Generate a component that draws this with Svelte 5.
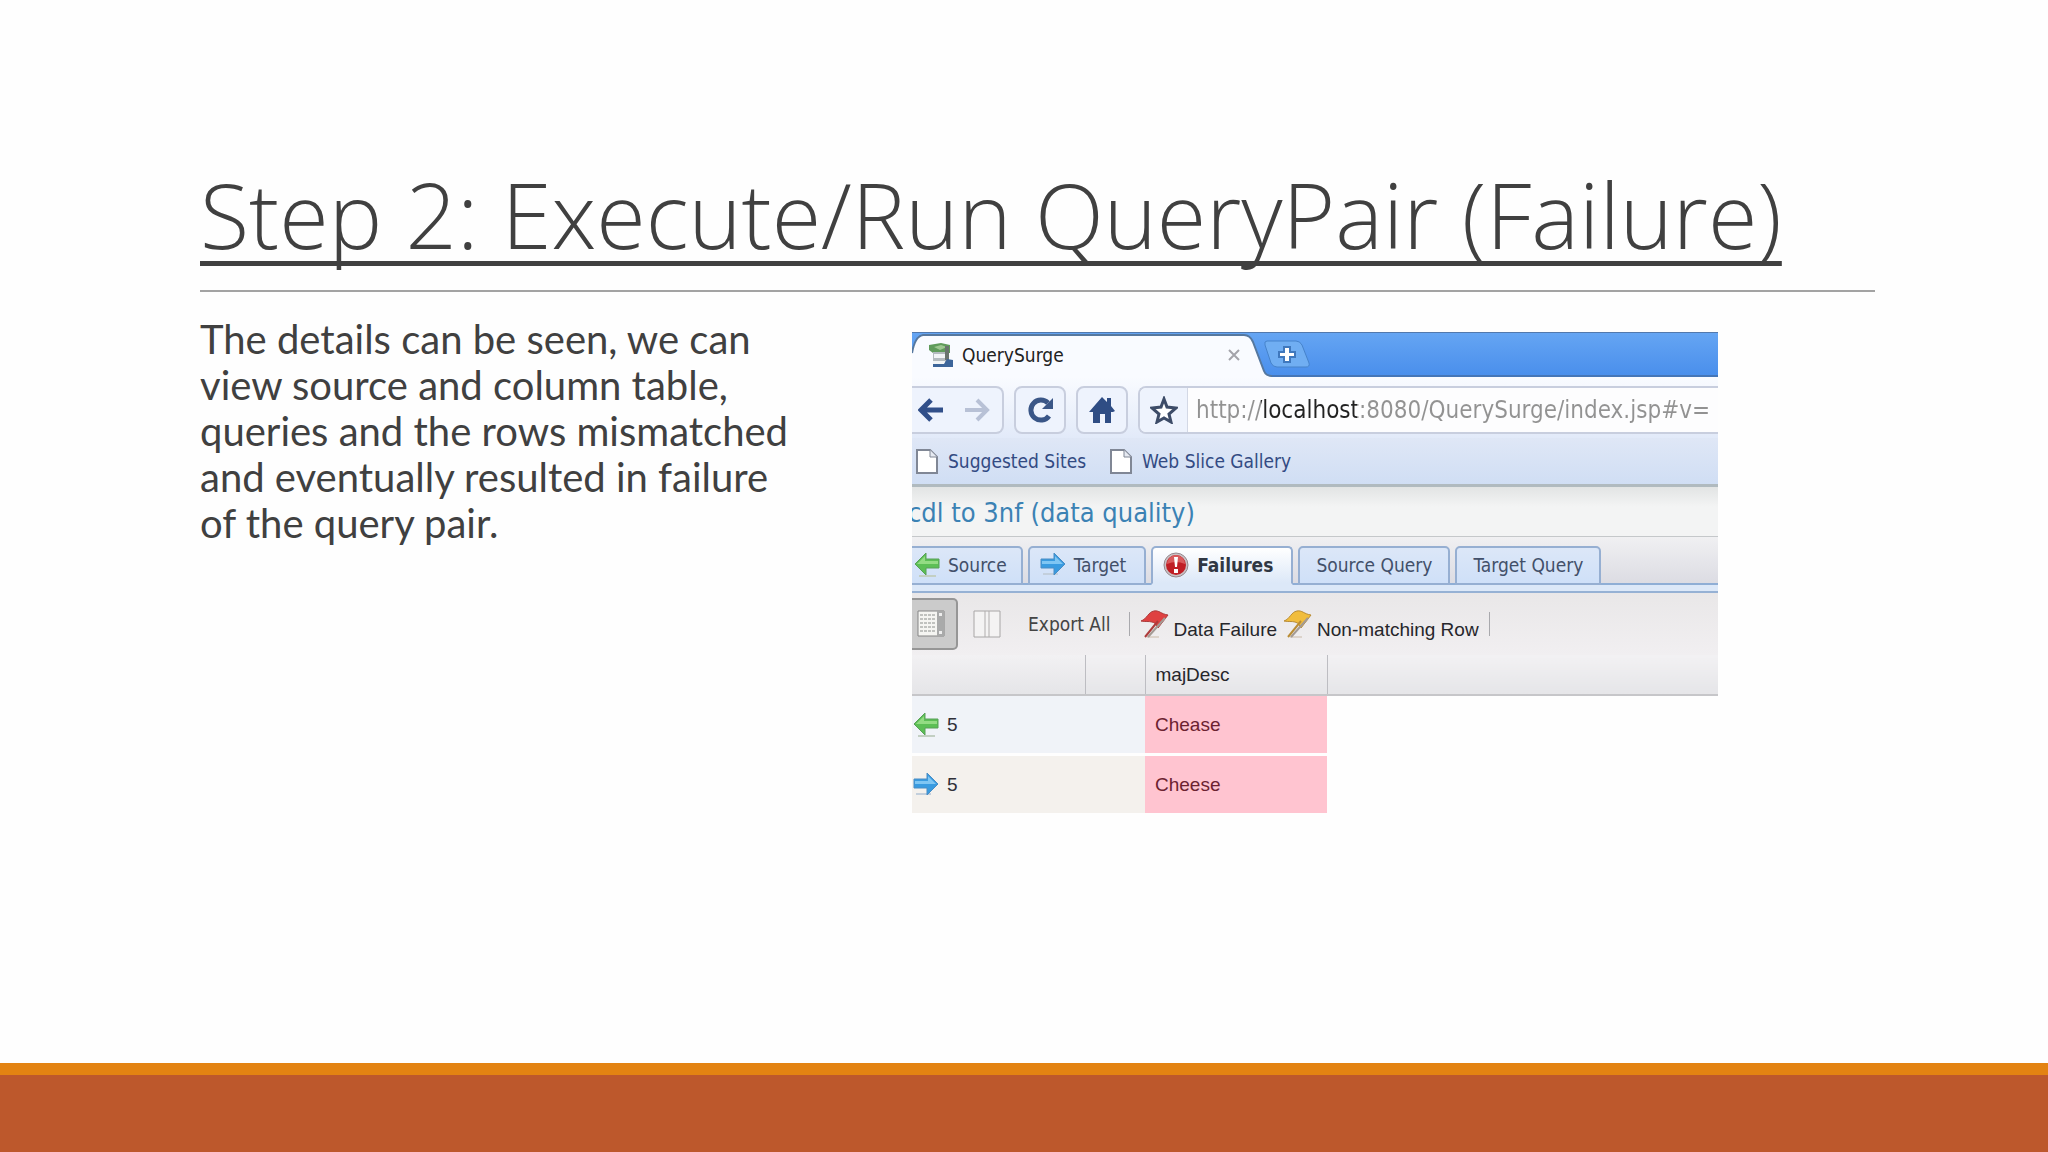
<script lang="ts">
  let address = $state('http://localhost:8080/QuerySurge/index.jsp#v=');
  let selectedTab = $state('Failures');

  const bookmarks = ['Suggested Sites', 'Web Slice Gallery'];
  const tabs = [
    { name: 'Source', icon: 'left' },
    { name: 'Target', icon: 'right' },
    { name: 'Failures', icon: 'alert' },
    { name: 'Source Query', icon: '' },
    { name: 'Target Query', icon: '' },
  ];
  const rows = [
    { side: 'left', id: 5, majDesc: 'Chease' },
    { side: 'right', id: 5, majDesc: 'Cheese' },
  ];
</script>

{#snippet arrow(side: string)}
  {#if side === 'left'}
    <svg class="icon" viewBox="0 0 26 26" aria-hidden="true">
      <path d="M5 24H22" stroke="#c3cfc3" stroke-width="2" />
      <path d="M1 12 12 1v6h13v9H12v7Z" fill="#5cbf55" stroke="#58a058" />
      <path d="M3 12 11 4v5h13v3Z" fill="#93dc83" />
    </svg>
  {:else}
    <svg class="icon" viewBox="0 0 26 26" aria-hidden="true">
      <path d="M3 22H18" stroke="#c3cfdc" stroke-width="2" />
      <path d="M25 12 14 1v6H1v9h13v7Z" fill="#399be0" stroke="#4a8dc4" />
      <path d="M23 12 15 4v5H2v3Z" fill="#7fc6f3" />
    </svg>
  {/if}
{/snippet}

{#snippet flag(fill: string, edge: string)}
  <svg class="flag" viewBox="0 0 29 28" aria-hidden="true">
    <path d="M7 27h12" stroke="#dcd3cb" stroke-width="2" />
    <path d="M1 11C7 9 8 2 14 1c5-1 7 3 14 4L18 18c-2-3-2-5-6-6-4-1-6 0-11-1Z" {fill} stroke={edge} />
    <path d="M25 8 8 27" stroke="#a39a94" stroke-width="2" />
    <path d="M18 11 5 27" stroke={edge} stroke-width="2" />
  </svg>
{/snippet}

<main class="slide">
  <header class="heading">
    <h1>Step 2: Execute/Run QueryPair (Failure)</h1>
  </header>

  <div class="columns">
    <p class="description">
      The details can be seen, we can view source and column table, queries and the rows mismatched
      and eventually resulted in failure of the query pair.
    </p>

    <section class="browser" aria-label="QuerySurge">
      <div class="tab-strip">
        <div class="page-tab">
          <svg class="tab-shape" viewBox="0 0 360 44" aria-hidden="true">
            <path d="M0 44V20Q3 3 11 2H332Q338 2 341 9L352 38Q354 43 360 44Z" fill="#f9fbff" />
            <path d="M0 20Q3 3 11 2H332Q338 2 341 9L352 38Q354 43 360 43" fill="none" stroke="#56789f" stroke-width="2" />
          </svg>
          <svg class="favicon" viewBox="0 0 26 26" aria-hidden="true">
            <path d="M1 3 13 1l9 2v8H5L1 8Z" fill="#5f9b5a" />
            <path d="M6 5 13 3l6 2-7 3Z" fill="#9dc790" />
            <path d="M5 10h15v15H5Z" fill="#b4bbbf" />
            <path d="M6 12h11v4H6ZM5 19h12v3H5Z" fill="#f2f5f6" />
            <path d="M17 4h4v14h-4Z" fill="#6a756e" />
            <path d="M5 25h20v-7l-6-1-3 5H5Z" fill="#3c659a" />
          </svg>
          <span class="page-name">QuerySurge</span>
          <button class="close" aria-label="Close tab">
            <svg viewBox="0 0 12 12"><path d="M1 1 11 11M11 1 1 11" stroke="#a3a3aa" stroke-width="2" /></svg>
          </button>
        </div>
        <button class="new-tab" aria-label="New tab">
          <svg viewBox="0 0 46 28">
            <path d="M3 1H32Q36 1 38 5L45 23Q46 27 42 27H13Q9 27 7 23L1 5Q0 1 3 1Z" fill="#70aef2" stroke="#4683cb" />
            <path d="M20 7h6v5h5v5h-5v5h-6v-5h-5v-5h5Z" fill="#fff" stroke="#3f78bd" stroke-width="2" />
          </svg>
        </button>
      </div>

      <div class="navigation">
        <div class="nav-group history">
          <button aria-label="Back">
            <svg viewBox="0 0 26 26"><path d="M13 3 3 13l10 10M4 13h21" fill="none" stroke="#314f89" stroke-width="5" /></svg>
          </button>
          <button aria-label="Forward">
            <svg viewBox="0 0 26 26"><path d="M13 3 23 13 13 23M22 13H1" fill="none" stroke="#b8c1d6" stroke-width="4" /></svg>
          </button>
        </div>
        <button class="nav-group single" aria-label="Reload">
          <svg viewBox="0 0 26 26">
            <path d="M21 6A10 10 0 1 0 22 19" fill="none" stroke="#3a5687" stroke-width="5" />
            <path d="M26 1V12H15Z" fill="#3a5687" />
          </svg>
        </button>
        <button class="nav-group single" aria-label="Home">
          <svg viewBox="0 0 26 26">
            <path d="M13 0 18 5V1h4v8l4 5-2 1h-2v11h-6v-9h-5v9H4V15H0Z" fill="#2f4d84" />
          </svg>
        </button>
        <div class="address">
          <button class="star" aria-label="Bookmark this page">
            <svg viewBox="0 0 28 28">
              <path d="M14 3 17 11l9 1-7 6 2 8-7-4-7 4 2-8-7-6 9-1Z" fill="#fff" stroke="#3d4c68" stroke-width="3" />
            </svg>
          </button>
          <input aria-label="Address" bind:value={address} />
        </div>
      </div>

      <nav class="bookmarks">
        {#each bookmarks as bookmark}
          <a href="#{bookmark}">
            <svg viewBox="0 0 22 25" aria-hidden="true">
              <path d="M1 1H14L21 8V24H1Z" fill="#fff" stroke="#808795" stroke-width="2" />
              <path d="M14 1V8H21" fill="#e6eaf2" stroke="#808795" />
            </svg>
            {bookmark}
          </a>
        {/each}
      </nav>

      <h2><span>cdl to 3nf (data quality)</span></h2>

      <div class="tabs" role="tablist">
        {#each tabs as tab}
          <button
            class="tab"
            class:with-icon={tab.icon}
            class:active={selectedTab === tab.name}
            role="tab"
            aria-selected={selectedTab === tab.name}
            onclick={() => (selectedTab = tab.name)}
          >
            {#if tab.icon === 'alert'}
              <svg class="icon" viewBox="0 0 26 26" aria-hidden="true">
                <circle cx="13" cy="13" r="12" fill="#c9c1c4" stroke="#96898e" />
                <circle cx="13" cy="13" r="10" fill="#c01e25" />
                <path d="M4 12a9 9 0 0 1 18 0Q13 8 4 12Z" fill="#d95a5c" />
                <path d="M11 5h4l-1 10h-2ZM11 17h4v4h-4Z" fill="#fff" />
              </svg>
            {:else if tab.icon}
              {@render arrow(tab.icon)}
            {/if}
            {tab.name}
          </button>
        {/each}
      </div>

      <div class="toolbar">
        <button class="view pressed" aria-label="Grid view">
          <svg viewBox="0 0 28 28">
            <path d="M1 1H27V26H1Z" fill="#f5f5f2" stroke="#858585" />
            <path d="M20 1h7v25h-7Z" fill="#a9aaaa" />
            <path d="M3 5H19M3 9H19M3 13H19M3 17H19M3 21H19" stroke="#8c8f8c" stroke-dasharray="3 1" />
            <path d="M22 3h3v3h-3ZM22 21h3v3h-3Z" fill="#eee" />
          </svg>
        </button>
        <button class="view" aria-label="Column view">
          <svg viewBox="0 0 28 28">
            <path d="M1 1H27V27H1Z" fill="#f4f3f3" stroke="#a8a6a6" />
            <path d="M12 1V27M16 1V27" stroke="#b0adad" />
          </svg>
        </button>
        <button class="export">Export All</button>
        <span class="separator"></span>
        <span class="legend">{@render flag('#df4141', '#ad3b3b')}<span>Data Failure</span></span>
        <span class="legend">{@render flag('#f1bd3d', '#b98c35')}<span>Non-matching Row</span></span>
        <span class="separator"></span>
      </div>

      <table>
        <colgroup><col class="id" /><col class="gap" /><col class="desc" /><col /></colgroup>
        <thead>
          <tr><th></th><th></th><th>majDesc</th><th></th></tr>
        </thead>
        <tbody>
          {#each rows as row}
            <tr class={row.side}>
              <td colspan="2"><div class="side">{@render arrow(row.side)}{row.id}</div></td>
              <td class="mismatch">{row.majDesc}</td>
              <td class="blank"></td>
            </tr>
          {/each}
        </tbody>
      </table>
    </section>
  </div>

  <footer></footer>
</main>

<style>
  :global(body) {
    margin: 0;
    background: #fefefe;
  }
  .slide {
    display: flex;
    flex-direction: column;
    min-height: 100vh;
    color: #404040;
    font-family: Lato, sans-serif;
  }
  .heading {
    margin: 0 173px 0 200px;
    padding-top: 156px;
    border-bottom: 2px solid #a3a3a3;
  }
  h1 {
    margin: 0;
    height: 134px;
    font-family: "Open Sans", sans-serif;
    font-size: 90px;
    font-weight: 300;
    line-height: 116px;
    white-space: nowrap;
    text-decoration: underline;
    text-decoration-thickness: 5px;
    text-decoration-skip-ink: none;
    text-underline-offset: 12px;
  }
  .columns {
    display: grid;
    grid-template-columns: 712fr 806fr;
    flex: 1;
    align-items: start;
    padding: 24px 330px 24px 200px;
  }
  .description {
    max-width: 600px;
    margin: 0;
    font-size: 40px;
    line-height: 46px;
  }
  .browser {
    margin-top: 16px;
    min-width: 0;
    overflow: hidden;
    color: #303038;
    font-family: "DejaVu Sans Condensed", "DejaVu Sans", sans-serif;
    font-size: 19px;
  }
  button {
    display: flex;
    align-items: center;
    justify-content: center;
    padding: 0;
    border: none;
    background: none;
    color: inherit;
    font: inherit;
    white-space: nowrap;
    cursor: pointer;
  }
  svg {
    display: block;
    flex-shrink: 0;
  }
  .icon,
  .favicon {
    width: 26px;
    height: 26px;
  }
  .tab-strip {
    display: flex;
    height: 42px;
    border-top: 1px solid #5279ad;
    border-bottom: 2px solid #4576b8;
    background: linear-gradient(#65a5f3, #4a8fec);
  }
  .page-tab {
    position: relative;
    display: flex;
    align-items: center;
    gap: 8px;
    box-sizing: border-box;
    width: 352px;
    padding: 2px 24px 0 16px;
  }
  .tab-shape {
    position: absolute;
    top: 0;
    left: 0;
    width: 360px;
    height: 44px;
  }
  .favicon,
  .page-name,
  .close {
    position: relative;
  }
  .page-name {
    flex: 1;
    color: #222;
  }
  .close svg {
    width: 12px;
    height: 12px;
  }
  .new-tab svg {
    width: 46px;
    height: 28px;
  }
  .navigation {
    display: flex;
    gap: 10px;
    padding: 9px 0 4px;
    background: linear-gradient(#f9fbff, #e2eaf9);
  }
  .nav-group,
  .address {
    box-sizing: border-box;
    height: 48px;
    border: 2px solid #c8cede;
    border-radius: 8px;
    background: #eef3fd;
  }
  .nav-group svg {
    width: 26px;
    height: 26px;
  }
  .history {
    display: flex;
    width: 92px;
    padding-left: 6px;
    gap: 20px;
    border-left: none;
    border-radius: 0 8px 8px 0;
  }
  .single {
    width: 52px;
  }
  .address {
    display: flex;
    flex: 1;
    min-width: 0;
    border-right: none;
    border-radius: 8px 0 0 8px;
    background: #fdfdfe;
    overflow: hidden;
  }
  .star {
    flex-shrink: 0;
    width: 48px;
    border-right: 1px solid #d3d8e5;
    background: #eef3fd;
  }
  .star svg {
    width: 28px;
    height: 28px;
  }
  /* host part is darker than the rest of the address */
  input {
    flex: 1;
    min-width: 0;
    padding: 0 0 0 8px;
    border: none;
    outline: none;
    background: linear-gradient(90deg, #929292 73px, #222 73px, #222 169px, #929292 169px);
    background-clip: text;
    color: transparent;
    font: inherit;
    font-size: 24px;
  }
  .bookmarks {
    display: flex;
    gap: 24px;
    height: 46px;
    padding-left: 4px;
    border-bottom: 3px solid #b0babf;
    background: linear-gradient(#dfe7f6, #d0def4);
  }
  .bookmarks a {
    display: flex;
    align-items: center;
    gap: 10px;
    color: #334b83;
    text-decoration: none;
    white-space: nowrap;
  }
  .bookmarks svg {
    width: 22px;
    height: 25px;
  }
  h2 {
    display: flex;
    margin: 0;
    height: 49px;
    border-bottom: 1px solid #c5c8ca;
    background: linear-gradient(#e2e4e4, #f3f4f4 40%);
    color: #3b82b4;
    font-size: 27px;
    font-weight: 400;
    line-height: 51px;
    white-space: nowrap;
  }
  /* title is scrolled slightly past the left edge */
  h2 span {
    margin-left: -4px;
  }
  .tabs {
    display: flex;
    gap: 5px;
    padding: 9px 0 6px;
    border-bottom: 2px solid #96b1d4;
    background: linear-gradient(#f0f0f2, #dcdce3 46px, #8faed5 46px, #8faed5 48px, #dce8f8 48px);
  }
  .tab {
    gap: 8px;
    box-sizing: border-box;
    height: 39px;
    padding: 0 16px 2px;
    border: 2px solid #96afd2;
    border-radius: 5px 5px 0 0;
    background: linear-gradient(#dce7f8, #cfe0f8);
    color: #42506a;
  }
  .tab.with-icon {
    padding: 0 18px 2px 10px;
  }
  .tab:first-child {
    padding: 0 14px 2px 2px;
    border-left: none;
    border-radius: 0 5px 0 0;
  }
  .tab.active {
    border-bottom-color: #dce8f8;
    background: linear-gradient(#fff, #dce8f8);
    color: #303743;
    font-weight: 700;
  }
  .toolbar {
    display: flex;
    align-items: center;
    gap: 6px;
    height: 62px;
    background: linear-gradient(#e9e7e8, #f1eff1);
    font-family: "Liberation Sans", sans-serif;
    color: #26262b;
    white-space: nowrap;
  }
  .view {
    box-sizing: border-box;
    width: 46px;
    height: 52px;
  }
  .view svg {
    width: 28px;
    height: 28px;
  }
  .view.pressed {
    padding-right: 6px;
    border: 2px solid #969696;
    border-left: none;
    border-radius: 0 5px 5px 0;
    background: #cbcbcb;
  }
  .export {
    padding: 0 8px 0 12px;
    color: #444;
    font-family: "DejaVu Sans Condensed", "DejaVu Sans", sans-serif;
  }
  .separator {
    width: 1px;
    height: 24px;
    background: #a9a9ad;
    margin: 0 4px;
  }
  .flag {
    width: 29px;
    height: 28px;
  }
  .legend {
    display: flex;
    align-items: center;
    gap: 5px;
  }
  .legend span {
    padding-top: 12px;
  }
  table {
    width: 100%;
    table-layout: fixed;
    border-collapse: collapse;
    font-family: "Liberation Sans", sans-serif;
  }
  .id {
    width: 173px;
  }
  .gap {
    width: 60px;
  }
  .desc {
    width: 182px;
  }
  th,
  td {
    padding: 0 10px;
    text-align: left;
  }
  th {
    box-sizing: border-box;
    height: 40px;
    border-right: 1px solid #bdbdc2;
    border-bottom: 2px solid #c6c6c9;
    background: linear-gradient(#f2f1f3, #e5e5e8);
    color: #26262b;
    font-weight: 400;
  }
  th:last-child {
    border-right: none;
  }
  td {
    height: 57px;
    border-bottom: 3px solid #fefefe;
  }
  .left td {
    background: #f0f3f8;
  }
  .right td {
    background: #f4f1ed;
  }
  td:first-child {
    padding-left: 1px;
  }
  .side {
    display: flex;
    align-items: center;
    gap: 8px;
  }
  tbody .mismatch {
    background: #ffc4d0;
    color: #6c2230;
  }
  tbody .blank {
    background: #fefefe;
  }
  footer {
    height: 77px;
    border-top: 12px solid #e38312;
    background: #bd582c;
  }
</style>
